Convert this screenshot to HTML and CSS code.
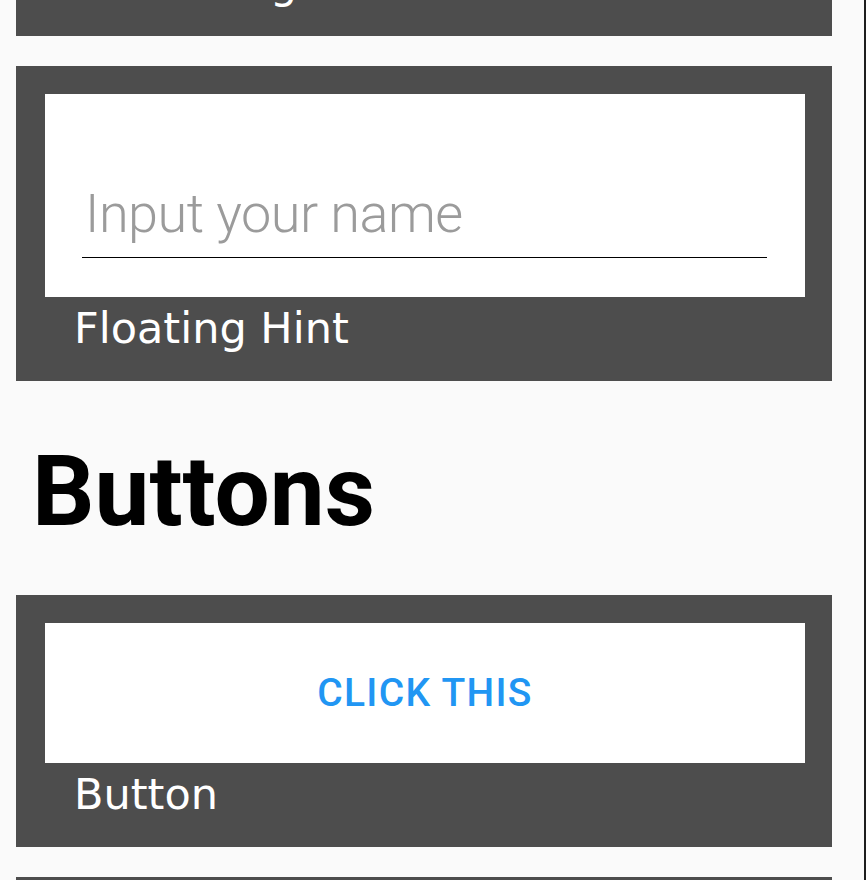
FILE: index.html
```html
<!DOCTYPE html>
<html lang="en">
<head>
<meta charset="utf-8">
<title>Widgets</title>
<link rel="stylesheet" href="styles.css">
</head>
<body>
<div class="page">
  <div class="list">
    <section class="card">
      <div class="surface surface-field"></div>
      <div class="card-label">Autosizing</div>
    </section>

    <section class="card">
      <div class="surface surface-field">
        <input class="text-input" type="text" placeholder="Input your name">
      </div>
      <div class="card-label">Floating Hint</div>
    </section>

    <h1 class="section-title">Buttons</h1>

    <section class="card">
      <div class="surface surface-button">
        <button class="flat-button" type="button">Click this</button>
      </div>
      <div class="card-label">Button</div>
    </section>

    <section class="card">
      <div class="surface surface-button"></div>
      <div class="card-label">Switch</div>
    </section>
  </div>
</div>
</body>
</html>
```

FILE: styles.css
```css
html, body {
  height: 100%;
  overflow: hidden;
}

body {
  margin: 0;
  background: #fafafa;
  font-family: "DejaVu Sans", sans-serif;
}

.page {
  height: 100%;
  border-right: 2px solid #1e1e1e;
  overflow: hidden;
}

.list {
  display: flex;
  flex-direction: column;
  padding: 0 32px 0 16px;
  margin-top: -279px;
}

.card {
  background: #4d4d4d;
  padding: 28px 27px 28px 29px;
  margin-bottom: 30px;
}

.surface {
  background: #ffffff;
  display: flex;
}

.surface-field {
  height: 203px;
  box-sizing: border-box;
  padding: 87px 38px 0 37px;
  align-items: flex-start;
}

.surface-button {
  height: 140px;
}

.card-label {
  color: #ffffff;
  font-family: "DejaVu Sans", sans-serif;
  font-size: 43px;
  line-height: 50px;
  padding: 6px 0 0 29px;
  white-space: nowrap;
}

.text-input {
  flex: 1;
  min-width: 0;
  height: 64px;
  padding: 0 0 12px 3px;
  margin: 0;
  border: 0;
  border-bottom: 1px solid #000000;
  background: transparent;
  font-family: Roboto, sans-serif;
  font-weight: 300;
  font-size: 54px;
  letter-spacing: -0.5px;
  color: #222;
  outline: none;
}

.text-input::placeholder {
  color: #9b9b9b;
  opacity: 1;
}

.section-title {
  margin: 21px 0 43px 16px;
  font-family: Roboto, sans-serif;
  font-weight: 700;
  font-size: 98px;
  line-height: 120px;
  color: #000000;
}

.flat-button {
  flex: 1;
  border: 0;
  margin: 0;
  padding: 0;
  background: #ffffff;
  color: #2196f3;
  font-family: Roboto, sans-serif;
  font-weight: 500;
  font-size: 39px;
  letter-spacing: 1.3px;
  text-transform: uppercase;
  cursor: pointer;
}
```
